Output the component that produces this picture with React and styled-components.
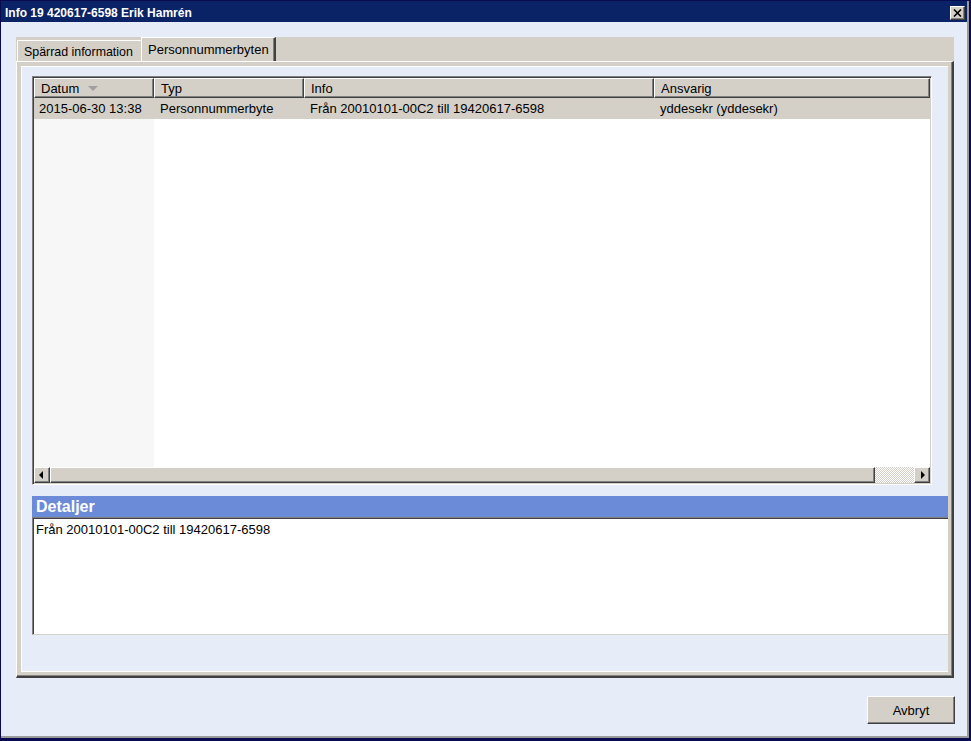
import React from "react";
import styled, { createGlobalStyle } from "styled-components";

const GlobalStyle = createGlobalStyle`
  html, body {
    margin: 0;
    padding: 0;
    background: #e7edf8;
  }
  body {
    font-family: "Liberation Sans", Arial, sans-serif;
    font-size: 13px;
    color: #000;
  }
  * { box-sizing: border-box; }
`;

const Window = styled.div`
  width: 971px;
  height: 741px;
  display: flex;
  flex-direction: column;
  background: #e7edf8;
  border-top: 1px solid #0a0a50;
  border-left: 1px solid #0a0a50;
  border-right: 2px solid #0a0a50;
  border-bottom: 3px solid #0a0a50;
  box-shadow: inset -2px -2px 0 #9a9a9a;
`;

const TitleBar = styled.div`
  height: 21px;
  margin-right: 2px;
  background: #0a2266;
  display: flex;
  align-items: center;
  justify-content: space-between;
  padding: 0 2px 0 4px;
`;

const Title = styled.span`
  color: #fff;
  font-weight: bold;
  font-size: 12px;
  padding-top: 2px;
`;

const CloseButton = styled.button`
  width: 15px;
  height: 14px;
  padding: 0;
  margin-top: 3px;
  background: #d4d0c8;
  border-top: 1px solid #fff;
  border-left: 1px solid #fff;
  border-right: 1px solid #404040;
  border-bottom: 1px solid #404040;
  box-shadow: inset -1px -1px 0 #808080;
  display: flex;
  align-items: center;
  justify-content: center;
`;

const Body = styled.div`
  flex: 1;
  display: flex;
  flex-direction: column;
  padding: 15px 15px 0 15px;
`;

const TabStrip = styled.div`
  height: 24px;
  background: #d4d0c8;
  display: flex;
  align-items: flex-end;
  padding-left: 1px;
`;

const Tab = styled.div`
  width: ${(p) => (p.$active ? 135 : 124)}px;
  height: ${(p) => (p.$active ? 24 : 21)}px;
  display: flex;
  align-items: center;
  padding-left: ${(p) => (p.$active ? 6 : 6)}px;
  padding-top: ${(p) => (p.$active ? 0 : 2)}px;
  font-size: ${(p) => (p.$active ? 13 : 12.4)}px;
  border-top: 1px solid #fff;
  border-left: 1px solid #fff;
  border-right: ${(p) => (p.$active ? "2px solid #404040" : "none")};
  box-shadow: ${(p) => (p.$active ? "inset -1px 0 0 #808080" : "none")};
  white-space: nowrap;
`;

const Panel = styled.div`
  height: 617px;
  display: flex;
  background: #d4d0c8;
  border-top: 1px solid #fff;
  border-left: 1px solid #fff;
  border-right: 2px solid #404040;
  border-bottom: 2px solid #404040;
  box-shadow: inset -1px -1px 0 #808080;
  padding: 4px 4px 4px 4px;
`;

const Inner = styled.div`
  flex: 1;
  display: flex;
  flex-direction: column;
  gap: 11px;
  background: #e7edf8;
  border-top: 1px solid #fff;
  border-left: 1px solid #fff;
  border-bottom: 1px solid #fff;
  padding: 9px 0 0 10px;
`;

const List = styled.div`
  width: 900px;
  height: 409px;
  display: flex;
  flex-direction: column;
  background: #fff;
  border-top: 1px solid #808080;
  border-left: 1px solid #808080;
  border-right: 1px solid #fff;
  border-bottom: 1px solid #fff;
  box-shadow: inset 1px 1px 0 #404040, inset -1px -1px 0 #d4d0c8;
  padding: 1px;
`;

const Columns = "120px 150px 350px 1fr";

const HeaderRow = styled.div`
  display: grid;
  grid-template-columns: ${Columns};
  height: 20px;
`;

const HeaderCell = styled.div`
  display: flex;
  align-items: center;
  gap: 9px;
  padding-left: 6px;
  background: #d4d0c8;
  border-top: 1px solid #fff;
  border-left: 1px solid #fff;
  border-right: 1px solid #404040;
  border-bottom: 1px solid #404040;
  box-shadow: inset -1px -1px 0 #808080;
`;

const SortArrow = styled.span`
  width: 0;
  height: 0;
  border-left: 5px solid transparent;
  border-right: 5px solid transparent;
  border-top: 5px solid #a0a0a0;
  margin-top: 1px;
`;

const Rows = styled.div`
  flex: 1;
  background: linear-gradient(to right, #f7f7f7 0 120px, #fff 120px);
`;

const Row = styled.div`
  display: grid;
  grid-template-columns: ${Columns};
  height: 21px;
  background: ${(p) => (p.$selected ? "#d4d0c8" : "transparent")};
`;

const Cell = styled.div`
  display: flex;
  align-items: center;
  padding-left: ${(p) => (p.$first ? 5 : 6)}px;
  white-space: nowrap;
`;

const ScrollBar = styled.div`
  height: 16px;
  display: flex;
`;

const ScrollButton = styled.div`
  width: 16px;
  height: 16px;
  background: #d4d0c8;
  border-top: 1px solid #fff;
  border-left: 1px solid #fff;
  border-right: 1px solid #404040;
  border-bottom: 1px solid #404040;
  box-shadow: inset -1px -1px 0 #808080;
  display: flex;
  align-items: center;
  justify-content: center;
`;

const Thumb = styled(ScrollButton)`
  width: 825px;
`;

const Track = styled.div`
  flex: 1;
  background: repeating-conic-gradient(#d4d0c8 0 25%, #fff 0 50%) 0 0 / 2px 2px;
`;

const Arrow = styled.span`
  width: 0;
  height: 0;
  border-top: 4px solid transparent;
  border-bottom: 4px solid transparent;
  ${(p) =>
    p.$dir === "left"
      ? "border-right: 4px solid #000; margin-right: 2px;"
      : "border-left: 4px solid #000; margin-left: 2px;"}
`;

const Details = styled.div`
  display: flex;
  flex-direction: column;
  height: 139px;
  margin-left: 0;
`;

const DetailsHeader = styled.div`
  height: 21px;
  background: #6b8bd9;
  color: #fff;
  font-weight: bold;
  font-size: 16px;
  display: flex;
  align-items: center;
  padding-left: 4px;
`;

const DetailsText = styled.div`
  flex: 1;
  background: #fff;
  border-top: 1px solid #808080;
  border-left: 1px solid #808080;
  border-bottom: 1px solid #d4d0c8;
  box-shadow: inset 1px 1px 0 #404040;
  padding: 4px 3px;
`;

const Footer = styled.div`
  display: flex;
  justify-content: flex-end;
  padding-top: 18px;
  margin-right: -1px;
`;

const Button = styled.button`
  width: 88px;
  height: 28px;
  font-family: "Liberation Sans", Arial, sans-serif;
  font-size: 13px;
  color: #000;
  background: #d4d0c8;
  border-top: 1px solid #fff;
  border-left: 1px solid #fff;
  border-right: 1px solid #404040;
  border-bottom: 1px solid #404040;
  box-shadow: inset -1px -1px 0 #808080;
  padding: 0;
`;

const rows = [
  {
    datum: "2015-06-30 13:38",
    typ: "Personnummerbyte",
    info: "Från 20010101-00C2 till 19420617-6598",
    ansvarig: "yddesekr (yddesekr)",
  },
];

export default function App() {
  return (
    <>
      <GlobalStyle />
      <Window>
        <TitleBar>
          <Title>Info 19 420617-6598 Erik Hamrén</Title>
          <CloseButton aria-label="Stäng">
            <svg width="9" height="8" viewBox="0 0 9 8">
              <path d="M1 0.5 L8 7.5 M8 0.5 L1 7.5" stroke="#000" strokeWidth="1.6" />
            </svg>
          </CloseButton>
        </TitleBar>
        <Body>
          <TabStrip>
            <Tab>Spärrad information</Tab>
            <Tab $active>Personnummerbyten</Tab>
          </TabStrip>
          <Panel>
            <Inner>
              <List>
                <HeaderRow>
                  <HeaderCell>
                    Datum <SortArrow />
                  </HeaderCell>
                  <HeaderCell>Typ</HeaderCell>
                  <HeaderCell>Info</HeaderCell>
                  <HeaderCell>Ansvarig</HeaderCell>
                </HeaderRow>
                <Rows>
                  {rows.map((r) => (
                    <Row key={r.datum} $selected>
                      <Cell $first>{r.datum}</Cell>
                      <Cell>{r.typ}</Cell>
                      <Cell>{r.info}</Cell>
                      <Cell>{r.ansvarig}</Cell>
                    </Row>
                  ))}
                </Rows>
                <ScrollBar>
                  <ScrollButton>
                    <Arrow $dir="left" />
                  </ScrollButton>
                  <Thumb />
                  <Track />
                  <ScrollButton>
                    <Arrow $dir="right" />
                  </ScrollButton>
                </ScrollBar>
              </List>
              <Details>
                <DetailsHeader>Detaljer</DetailsHeader>
                <DetailsText>Från 20010101-00C2 till 19420617-6598</DetailsText>
              </Details>
            </Inner>
          </Panel>
          <Footer>
            <Button>Avbryt</Button>
          </Footer>
        </Body>
      </Window>
    </>
  );
}
